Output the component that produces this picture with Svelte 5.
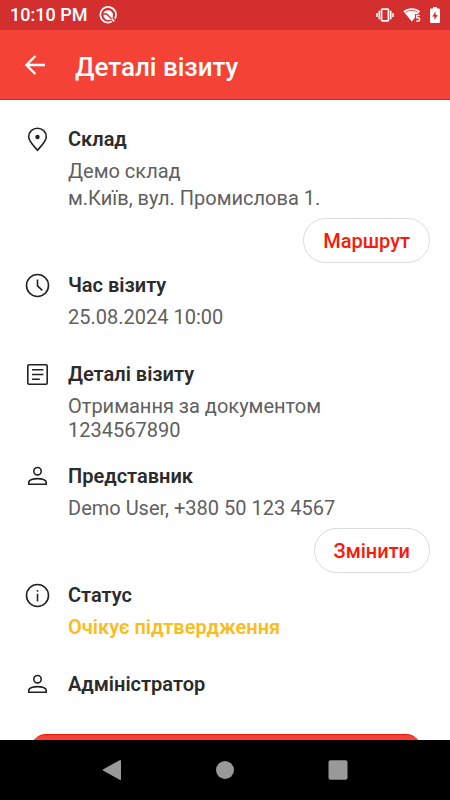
<script>
    const visit = [
        {
            icon: "pin",
            title: "Склад",
            lines: ["Демо склад", "м.Київ, вул. Промислова 1."],
            action: "Маршрут",
        },
        { icon: "clock", title: "Час візиту", lines: ["25.08.2024 10:00"] },
        {
            icon: "note",
            title: "Деталі візиту",
            lines: ["Отримання за документом 1234567890"],
            compact: true,
        },
        {
            icon: "person",
            title: "Представник",
            lines: ["Demo User, +380 50 123 4567"],
            action: "Змінити",
        },
        {
            icon: "info",
            title: "Статус",
            lines: ["Очікує підтвердження"],
            pending: true,
        },
        { icon: "person", title: "Адміністратор", lines: [] },
    ];
</script>

<div class="screen">
    <div class="status-bar">
        <span class="time">10:10 PM</span>
        <svg class="app-mark" width="18" height="18" viewBox="0 0 18 18">
            <path
                d="M12.8 15.6A7.8 7.8 0 1 1 15.8 12.8"
                fill="none"
                stroke="#fff"
                stroke-width="1.7"
            />
            <path
                d="M4.2 7.4C5.6 3.8 11.4 3 13.4 6.8C14.4 8.8 14 11 13.2 12.6L8.5 7.8C7.3 6.7 5.7 6.6 4.2 7.4Z"
                fill="#fff"
            />
            <path
                d="M4.4 9C5.8 8 7.2 8.4 8.2 9.5L12.3 13.6C9.2 15.2 4.6 13.4 4.4 9Z"
                fill="#fff"
            />
            <path d="M12.6 12.8L15.2 15.4" stroke="#fff" stroke-width="1.6" />
        </svg>
        <div class="status-icons">
            <svg width="18" height="14" viewBox="0 0 18 14">
                <rect x="5.5" y="1.2" width="7" height="11.6" rx="1" fill="none" stroke="#fff" stroke-width="1.8" />
                <path
                    d="M3.2 2.8v8.4M14.8 2.8v8.4M1 5v4M17 5v4"
                    fill="none"
                    stroke="#fff"
                    stroke-width="1.5"
                />
            </svg>
            <svg width="18" height="16" viewBox="0 0 18 16">
                <path
                    d="M0.4 4.2C4.8 0.3 12.8 0.3 17.2 4.2L14.8 7H12V10.4L8.8 14.6Z"
                    fill="#fff"
                />
                <path
                    d="M2.6 5.4C6.2 2.8 11.4 2.8 15 5.4"
                    fill="none"
                    stroke="#d32f2f"
                    stroke-width="0.8"
                />
                <path
                    d="M16.8 8.4H13.8V10.8H15.2C17.2 10.8 17.2 14 15.2 14H13.4"
                    fill="none"
                    stroke="#fff"
                    stroke-width="1.4"
                />
            </svg>
            <svg width="10" height="16" viewBox="0 0 10 16">
                <path
                    d="M3 0H7V1.6H9Q10 1.6 10 2.6V15Q10 16 9 16H1Q0 16 0 15V2.6Q0 1.6 1 1.6H3Z"
                    fill="#fff"
                />
                <path d="M5.6 4.6L2.2 9.6H4.4V13L7.8 8H5.6Z" fill="#d32f2f" />
            </svg>
        </div>
    </div>

    <header>
        <button class="back" aria-label="Назад">
            <svg width="20" height="20" viewBox="0 0 20 20">
                <path
                    d="M20 10H1.6M10.4 1L1.4 10L10.4 19"
                    fill="none"
                    stroke="#fff"
                    stroke-width="2.4"
                />
            </svg>
        </button>
        <h1>Деталі візиту</h1>
    </header>

    <main>
        {#each visit as item}
            <section class:with-action={item.action} class:compact={item.compact}>
                <svg class="icon" width="25" height="25" viewBox="0 0 25 25">
                    {#if item.icon === "pin"}
                        <path
                            d="M12.5 23.2C9.5 19.6 3.7 14.4 3.7 9.7A8.8 8.5 0 0 1 21.3 9.7C21.3 14.4 15.5 19.6 12.5 23.2Z"
                        />
                        <circle class="solid" cx="12.5" cy="10" r="2.2" />
                    {:else if item.icon === "clock"}
                        <circle cx="12.5" cy="12.5" r="11" />
                        <path d="M12.5 6.5V12.8L17.3 17.4" />
                    {:else if item.icon === "note"}
                        <rect x="2.8" y="2.8" width="19.4" height="19.4" rx="1.2" />
                        <path d="M7 7.8H18.4M7 12.5H18.4M7 17.2H14.8" />
                    {:else if item.icon === "person"}
                        <circle cx="12.5" cy="7.2" r="3.7" />
                        <path
                            d="M3.8 20.3V18.3C3.8 16 8.4 14.6 12.5 14.6C16.6 14.6 21.2 16 21.2 18.3V20.3Z"
                        />
                    {:else}
                        <circle cx="12.5" cy="12.5" r="11" />
                        <path d="M12.5 10.8V18.4" />
                        <circle class="solid" cx="12.5" cy="7.9" r="0.9" />
                    {/if}
                </svg>
                <div class="body">
                    <h2>{item.title}</h2>
                    {#each item.lines as line}
                        <p class:pending={item.pending}>{line}</p>
                    {/each}
                    {#if item.action}
                        <button class="action">{item.action}</button>
                    {/if}
                </div>
            </section>
        {/each}
        <button class="submit" aria-label="Продовжити"></button>
    </main>

    <nav>
        <button aria-label="Назад">
            <svg width="20" height="20" viewBox="0 0 20 20">
                <path d="M1.4 9.2L17.6 0.2Q19 -0.2 19 1V19Q19 20.2 17.6 19.8L1.4 10.8Q0 10 1.4 9.2Z" />
            </svg>
        </button>
        <button aria-label="Додому">
            <svg width="20" height="20" viewBox="0 0 20 20">
                <circle cx="10" cy="10" r="9" />
            </svg>
        </button>
        <button aria-label="Огляд">
            <svg width="20" height="20" viewBox="0 0 20 20">
                <rect x="0.5" y="0.2" width="19" height="19.6" rx="2" />
            </svg>
        </button>
    </nav>
</div>

<style>
    :global(body) {
        background: #fff;
    }

    .screen {
        display: flex;
        flex-direction: column;
        height: 100vh;
        font-family: Roboto, "Liberation Sans", sans-serif;
        font-size: 20px;
        line-height: 24px;
    }

    button {
        padding: 0;
        border: none;
        background: none;
        font: inherit;
        cursor: pointer;
    }

    svg {
        display: block;
        flex: none;
    }

    .status-bar {
        display: flex;
        align-items: center;
        flex: none;
        height: 30px;
        padding: 0 10px;
        background: #d32f2f;
        color: #fff;
    }

    .time {
        font-size: 18px;
        font-weight: 500;
    }

    .app-mark {
        margin-left: 12px;
    }

    .status-icons {
        display: flex;
        align-items: center;
        gap: 9px;
        margin-left: auto;
    }

    header {
        display: flex;
        align-items: center;
        flex: none;
        gap: 30px;
        height: 69px;
        padding: 0 25px;
        border-bottom: 1px solid #f01808;
        background: #f44336;
        color: #fff;
    }

    h1 {
        margin: 0;
        padding-top: 4px;
        font-size: 26px;
        font-weight: 500;
        line-height: 30px;
    }

    main {
        flex: 1;
        min-height: 0;
        overflow: hidden;
        padding: 27px 20px 0 25px;
    }

    section {
        display: flex;
        gap: 18px;
        margin-bottom: 33px;
    }

    section.with-action {
        margin-bottom: 10px;
    }

    section.compact {
        margin-bottom: 22px;
    }

    .icon {
        fill: none;
        stroke: #222;
        stroke-width: 1.6;
    }

    .icon .solid {
        fill: #222;
        stroke: none;
    }

    .body {
        display: flex;
        flex-direction: column;
        flex: 1;
        gap: 3px;
    }

    h2 {
        margin: 0 0 5px;
        color: #2b2b2b;
        font-size: 20px;
        font-weight: 600;
        line-height: 24px;
    }

    p {
        max-width: 300px;
        margin: 0;
        color: #606060;
    }

    .pending {
        color: #fbbc1c;
        font-weight: 600;
    }

    .action {
        align-self: flex-end;
        height: 45px;
        margin-top: 5px;
        padding: 0 19px;
        border: 1px solid #dcdcdc;
        border-radius: 23px;
        color: #f91a0a;
        font-weight: 500;
    }

    .submit {
        display: block;
        width: calc(100% - 15px);
        height: 60px;
        margin-left: 6px;
        border-top: 1px solid #f01808;
        border-radius: 15px;
        background: #f44336;
    }

    nav {
        display: flex;
        justify-content: space-around;
        align-items: center;
        flex: none;
        height: 60px;
        padding: 0 55px;
        background: #000;
    }

    nav svg {
        fill: #999;
    }
</style>
